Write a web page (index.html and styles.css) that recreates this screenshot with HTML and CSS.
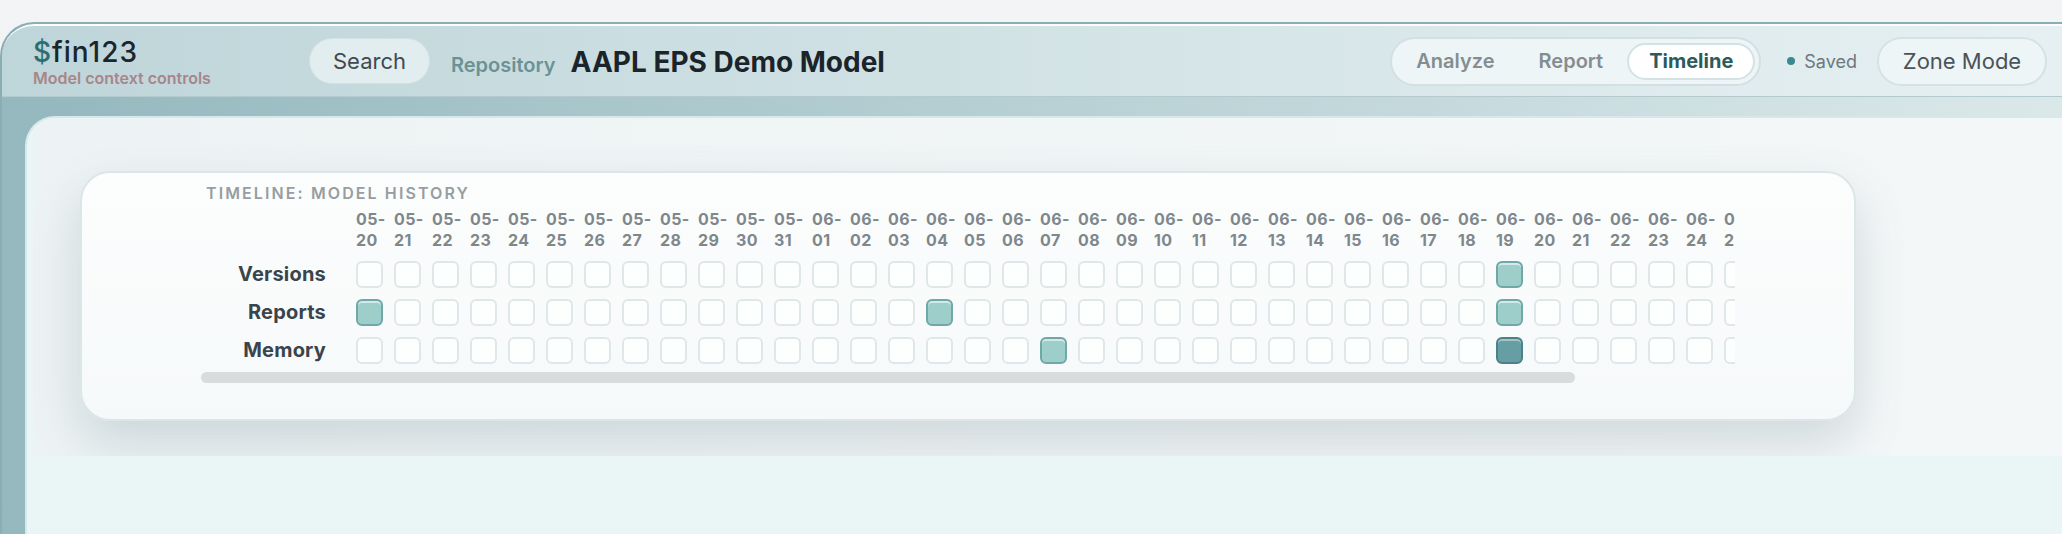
FILE: index.html
```html
<!DOCTYPE html>
<html lang="en">
<head>
    <meta charset="UTF-8">
    <meta name="viewport" content="width=device-width, initial-scale=1.0">
    <title>fin123 - Timeline</title>
    <link rel="stylesheet" href="styles.css">
</head>
<body>
    <div class="frame">
        <header class="topbar">
            <div class="brand">
                <div class="brand-name"><span class="dollar">$</span>fin123</div>
                <div class="brand-sub">Model context controls</div>
            </div>
            <button class="search-btn">Search</button>
            <div class="model-info">
                <span class="repo-label">Repository</span>
                <span class="model-title">AAPL EPS Demo Model</span>
            </div>
            <div class="mode-switch">
                <button class="mode">Analyze</button>
                <button class="mode">Report</button>
                <button class="mode active">Timeline</button>
            </div>
            <div class="status"><span class="dot"></span>Saved</div>
            <button class="zone-btn">Zone Mode</button>
        </header>

        <div class="panel">
            <div class="stage">
                <section class="card">
                    <h2 class="card-title">Timeline: Model History</h2>
                    <div class="timeline-scroll">
                        <div id="grid" class="timeline-grid"></div>
                    </div>
                    <div class="scroll-track"><div class="scroll-thumb"></div></div>
                </section>
            </div>
        </div>
    </div>

    <script>
        // 41 days, 05-20 .. 06-29
        const days = [];
        for (let d = 20; d <= 31; d++) days.push(['05', String(d).padStart(2, '0')]);
        for (let d = 1; d <= 29; d++) days.push(['06', String(d).padStart(2, '0')]);

        // index -> 'on' or 'strong'
        const rows = [
            { name: 'Versions', marks: { 30: 'on' } },
            { name: 'Reports', marks: { 0: 'on', 15: 'on', 30: 'on' } },
            { name: 'Memory', marks: { 18: 'on', 30: 'strong' } }
        ];

        const grid = document.getElementById('grid');

        const corner = document.createElement('div');
        grid.appendChild(corner);
        days.forEach(([m, d]) => {
            const head = document.createElement('div');
            head.className = 'day';
            head.innerHTML = `${m}-<br>${d}`;
            grid.appendChild(head);
        });

        rows.forEach(row => {
            const label = document.createElement('div');
            label.className = 'row-label';
            label.textContent = row.name;
            grid.appendChild(label);
            days.forEach((day, i) => {
                const cell = document.createElement('div');
                cell.className = 'cell';
                if (row.marks[i]) cell.classList.add(row.marks[i]);
                grid.appendChild(cell);
            });
        });
    </script>
</body>
</html>
```

FILE: styles.css
```css
body {
    margin: 0;
    padding-top: 22px;
    font-family: Inter, "Noto Sans", sans-serif;
    background: linear-gradient(180deg, #f2f4f5, #e8ecec);
    overflow: hidden;
}
button {
    font-family: inherit;
    cursor: pointer;
}
.frame {
    height: 510px;
    border-top: 2px solid #8aaeb4;
    border-left: 2px solid #8aaeb4;
    border-top-left-radius: 34px;
    background: linear-gradient(90deg, #94b8be, #dbe8ea);
    overflow: hidden;
}
.topbar {
    display: flex;
    align-items: center;
    height: 70px;
    padding: 0 15px 0 31px;
    border-top: 2px solid #fbfdfd;
    border-bottom: 1px solid #b5cace;
    border-top-left-radius: 32px;
    background: linear-gradient(90deg, #bed5d9, #e6f0f2);
}
.brand {
    width: 276px;
    padding-top: 2px;
}
.brand-name {
    font-size: 28px;
    line-height: 31px;
    font-weight: 500;
    letter-spacing: 1px;
    color: #1b252d;
}
.dollar {
    color: #2e6e73;
}
.brand-sub {
    font-size: 16px;
    line-height: 20px;
    font-weight: 600;
    color: #a8858a;
}
.search-btn {
    width: 121px;
    height: 46px;
    border: 1px solid #d2e1e4;
    border-radius: 23px;
    background: #e2edef;
    font-size: 22px;
    color: #3f4a50;
}
.model-info {
    display: flex;
    align-items: baseline;
    gap: 15px;
    margin-left: 21px;
    padding-top: 2px;
}
.repo-label {
    font-size: 20px;
    font-weight: 600;
    color: #6a9296;
}
.model-title {
    font-size: 28px;
    font-weight: 700;
    color: #1b242b;
}
.mode-switch {
    display: flex;
    gap: 4px;
    margin-left: auto;
    padding: 4px;
    border: 2px solid #d3e0e3;
    border-radius: 26px;
    background: #edf5f6;
}
.mode {
    height: 37px;
    padding: 0 20px;
    border: none;
    border-radius: 19px;
    background: none;
    font-size: 20px;
    font-weight: 600;
    color: #858d91;
}
.mode.active {
    border: 2px solid #d3e3e5;
    background: #fff;
    color: #2c5a5e;
    font-weight: 700;
}
.status {
    display: flex;
    align-items: center;
    margin-left: 26px;
    font-size: 18px;
    color: #6e787c;
}
.dot {
    width: 8px;
    height: 8px;
    margin-right: 9px;
    border-radius: 50%;
    background: #3c8a91;
}
.zone-btn {
    width: 170px;
    height: 49px;
    margin-left: 20px;
    border: 2px solid #d5e2e4;
    border-radius: 25px;
    background: #eef5f6;
    font-size: 22px;
    color: #4a5357;
}
.panel {
    height: 420px;
    margin: 19px 0 0 23px;
    border-top: 2px solid #d5e9eb;
    border-left: 2px solid #d5e9eb;
    border-top-left-radius: 30px;
    background: #eaf6f6;
    overflow: hidden;
}
.stage {
    margin-left: 6px;
    padding: 53px 0 35px 47px;
    background: linear-gradient(90deg, #edf3f4, #f4f7f8);
    overflow: hidden;
}
.card {
    width: 1534px;
    padding: 10px 119px 36px;
    border: 2px solid #dce5e7;
    border-radius: 30px;
    background: linear-gradient(180deg, #fcfdfd, #f6f9fa);
    box-shadow: 0 22px 50px rgba(70, 100, 110, 0.2);
}
.card-title {
    margin: 0 0 6px;
    padding-left: 5px;
    font-size: 16px;
    line-height: 20px;
    font-weight: 600;
    letter-spacing: 2.1px;
    text-transform: uppercase;
    color: #979da1;
}
.timeline-scroll {
    overflow: hidden;
}
.timeline-grid {
    display: grid;
    grid-template-columns: 144px repeat(41, 27px);
    grid-template-rows: 41px 27px 27px 27px;
    column-gap: 11px;
    row-gap: 11px;
    width: 1702px;
}
.day {
    font-size: 16px;
    line-height: 21px;
    font-weight: 700;
    letter-spacing: 0.4px;
    color: #7e878c;
    white-space: nowrap;
}
.row-label {
    padding-right: 19px;
    text-align: right;
    font-size: 20px;
    line-height: 27px;
    font-weight: 700;
    letter-spacing: 0.2px;
    color: #3a444a;
}
.cell {
    box-sizing: border-box;
    border: 2px solid #dfe7e9;
    border-radius: 6px;
    background: #fdfefe;
}
.cell.on {
    border-color: #6fa8a6;
    background: #9dcec9;
    box-shadow: inset 0 2px 0 rgba(255, 255, 255, 0.55);
}
.cell.strong {
    border-color: #4a8288;
    background: #669ea3;
    box-shadow: inset 0 2px 0 rgba(255, 255, 255, 0.4);
}
.scroll-track {
    height: 11px;
    margin-top: 8px;
}
.scroll-thumb {
    width: 89.6%;
    height: 100%;
    border-radius: 6px;
    background: #d9dcdd;
}
```
